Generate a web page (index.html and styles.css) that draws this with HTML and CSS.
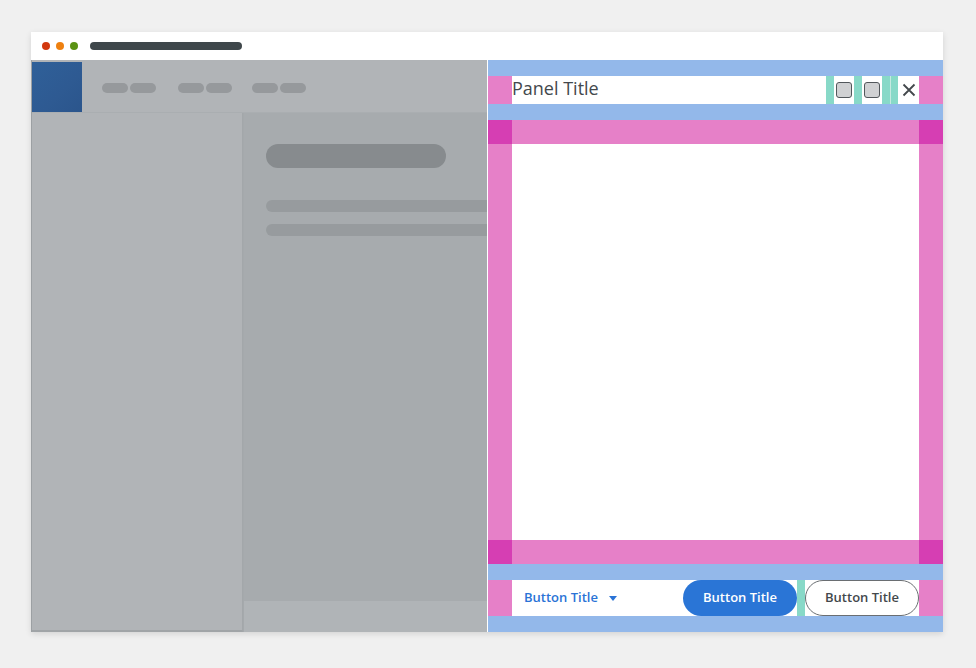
FILE: index.html
```html
<!DOCTYPE html>
<html>
<head>
<meta charset="utf-8">
<link rel="stylesheet" href="styles.css">
</head>
<body>
<div class="window">
  <div class="titlebar">
    <span class="dot red"></span><span class="dot orange"></span><span class="dot green"></span>
    <span class="address"></span>
  </div>
  <div class="content">
    <div class="app">
      <div class="app-header">
        <div class="logo"></div>
        <div class="nav">
          <div class="nav-group"><span class="pill"></span><span class="pill"></span></div>
          <div class="nav-group"><span class="pill"></span><span class="pill"></span></div>
          <div class="nav-group"><span class="pill"></span><span class="pill"></span></div>
        </div>
      </div>
      <div class="app-body">
        <div class="sidebar"></div>
        <div class="main">
          <div class="main-inner">
            <div class="title-pill"></div>
            <div class="line"></div>
            <div class="line second"></div>
          </div>
          <div class="main-footer"></div>
        </div>
      </div>
    </div>
    <div class="divider"></div>
    <div class="panel">
      <div class="blue"></div>
      <div class="row header-row">
        <div class="pink-side"></div>
        <div class="header-content">
          <div class="panel-title">Panel Title</div>
          <div class="teal"></div>
          <div class="icon-box"><span class="sq"></span></div>
          <div class="teal"></div>
          <div class="icon-box"><span class="sq"></span></div>
          <div class="teal double"><span class="sliver"></span></div>
          <div class="icon-box close">
            <svg width="14" height="14" viewBox="0 0 14 14"><path d="M1.5 1.5 L12.5 12.5 M12.5 1.5 L1.5 12.5" stroke="#43484c" stroke-width="1.8" fill="none"/></svg>
          </div>
        </div>
        <div class="pink-side"></div>
      </div>
      <div class="blue"></div>
      <div class="row band">
        <div class="corner"></div><div class="band-mid"></div><div class="corner"></div>
      </div>
      <div class="row body-row">
        <div class="pink-side"></div>
        <div class="panel-body"></div>
        <div class="pink-side"></div>
      </div>
      <div class="row band">
        <div class="corner"></div><div class="band-mid"></div><div class="corner"></div>
      </div>
      <div class="blue"></div>
      <div class="row footer-row">
        <div class="pink-side"></div>
        <div class="footer-content">
          <button class="link-btn">Button Title <span class="caret"></span></button>
          <div class="spacer"></div>
          <button class="primary-btn">Button Title</button>
          <div class="teal"></div>
          <button class="secondary-btn">Button Title</button>
        </div>
        <div class="pink-side"></div>
      </div>
      <div class="blue"></div>
    </div>
  </div>
</div>
</body>
</html>
```

FILE: styles.css
```css
html, body {
  margin: 0;
  padding: 0;
}
body {
  background: #f0f0f0;
  font-family: "Open Sans", "Liberation Sans", sans-serif;
  padding: 32px 0 0 31px;
  height: 668px;
  box-sizing: border-box;
}
.window {
  width: 912px;
  height: 600px;
  display: flex;
  flex-direction: column;
  background: #fff;
  box-shadow: 0 2px 6px rgba(0,0,0,0.12);
}
.titlebar {
  height: 28px;
  display: flex;
  align-items: center;
  padding-left: 11px;
  background: #fff;
}
.dot {
  width: 8px;
  height: 8px;
  border-radius: 50%;
  margin-right: 6px;
}
.red { background: #d2380e; }
.orange { background: #ee8010; }
.green { background: #5a9213; }
.address {
  margin-left: 6px;
  width: 152px;
  height: 8px;
  border-radius: 4px;
  background: #3f474b;
}
.content {
  height: 572px;
  display: flex;
}
.app {
  width: 455px;
  flex-shrink: 0;
  border-left: 1px solid #9ca0a3;
  display: flex;
  flex-direction: column;
  overflow: hidden;
}
.app-header {
  height: 52px;
  background: #b1b4b7;
  display: flex;
  align-items: flex-start;
}
.logo {
  margin-top: 2px;
  width: 50px;
  height: 50px;
  background: linear-gradient(135deg, #2f6099 0%, #2e5a92 60%, #2b558c 100%);
}
.nav {
  display: flex;
  margin-left: 20px;
  margin-top: 23px;
}
.nav-group {
  display: flex;
  gap: 2px;
  margin-right: 22px;
}
.nav-group + .nav-group {
  margin-right: 20px;
}
.pill {
  width: 26px;
  height: 10px;
  border-radius: 5px;
  background: #96999c;
}
.app-body {
  flex: 1;
  display: flex;
  border-top: 1px solid #aaaeb1;
}
.sidebar {
  width: 210px;
  flex-shrink: 0;
  background: #b1b4b7;
  border-right: 1px solid #a3a7aa;
  border-bottom: 2px solid #a0a4a7;
}
.main {
  flex: 1;
  min-width: 0;
  display: flex;
  flex-direction: column;
  background: #a7abae;
  border-left: 1px solid #a5a9ac;
  overflow: hidden;
}
.main-inner {
  flex: 1;
  padding: 31px 0 0 22px;
}
.title-pill {
  width: 180px;
  height: 24px;
  border-radius: 12px;
  background: #878b8e;
}
.line {
  margin-top: 32px;
  width: 260px;
  height: 12px;
  border-radius: 6px;
  background: #979b9e;
}
.line.second {
  margin-top: 12px;
}
.main-footer {
  height: 31px;
  background: #b0b4b7;
}
.divider {
  width: 1px;
  flex-shrink: 0;
  background: #fff;
}
.panel {
  width: 455px;
  flex-shrink: 0;
  display: flex;
  flex-direction: column;
}
.blue {
  height: 16px;
  background: #93b8ea;
}
.row {
  display: flex;
}
.pink-side {
  width: 24px;
  background: #e680c8;
}
.header-row { height: 28px; }
.header-content {
  flex: 1;
  display: flex;
  background: #fff;
  align-items: stretch;
}
.panel-title {
  flex: 1;
  font-size: 18px;
  line-height: 25px;
  color: #43484c;
}
.teal {
  width: 8px;
  background: #88d9c8;
}
.teal.double {
  width: 16px;
  position: relative;
}
.sliver {
  position: absolute;
  left: 8px;
  top: 0;
  width: 1px;
  height: 100%;
  background: #c6e9e0;
}
.icon-box {
  width: 20px;
  display: flex;
  align-items: center;
  justify-content: center;
}
.icon-box.close {
  width: 21px;
}
.sq {
  width: 16px;
  height: 16px;
  box-sizing: border-box;
  border: 1.5px solid #52575b;
  border-radius: 3px;
  background: #d0d1d3;
}
.band { height: 24px; }
.corner {
  width: 24px;
  background: #d63eb3;
}
.band-mid {
  flex: 1;
  background: #e680c8;
}
.body-row { height: 396px; }
.panel-body {
  flex: 1;
  background: #fff;
}
.footer-row { height: 36px; }
.footer-content {
  flex: 1;
  display: flex;
  background: #fff;
  align-items: stretch;
}
button {
  font-family: "Open Sans", "Liberation Sans", sans-serif;
  font-size: 13px;
  font-weight: 600;
  line-height: 32px;
  cursor: pointer;
}
.link-btn {
  border: none;
  background: none;
  color: #2a73d6;
  padding: 0 0 2px 12px;
  display: flex;
  align-items: center;
}
.caret {
  display: inline-block;
  width: 0;
  height: 0;
  border-left: 4px solid transparent;
  border-right: 4px solid transparent;
  border-top: 5px solid #2a73d6;
  margin-left: 11px;
  margin-top: 2px;
}
.spacer { flex: 1; }
.primary-btn {
  width: 114px;
  border: none;
  border-radius: 18px;
  background: #2a75d6;
  color: #fff;
  padding: 0 0 3px;
}
.secondary-btn {
  width: 114px;
  border: 1px solid #6a6e72;
  border-radius: 18px;
  background: #fff;
  color: #43484c;
  padding: 0 0 3px;
}
```
